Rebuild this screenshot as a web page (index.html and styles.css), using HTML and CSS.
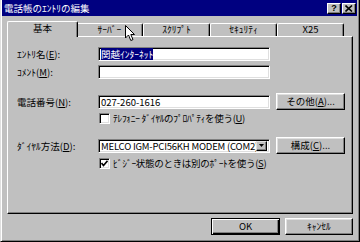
FILE: index.html
```html
<!DOCTYPE html>
<html lang="ja">
<head>
  <meta charset="UTF-8" />
  <title>電話帳のｴﾝﾄﾘの編集</title>
  <link rel="stylesheet" href="styles.css">
</head>
<body>
  <div class="window">
    <div class="titlebar">
      <span class="title">電話帳のｴﾝﾄﾘの編集</span>
      <div class="title-buttons">
        <div class="tbtn help">?</div>
        <div class="tbtn">
          <svg width="8" height="7" viewBox="0 0 8 7"><path d="M0.5 0.5 L7 6.5 M7 0.5 L0.5 6.5" stroke="#000" stroke-width="1.6"/></svg>
        </div>
      </div>
    </div>

    <div class="content">
      <!-- タブ -->
      <div class="tabs">
        <div class="tab active">基本</div>
        <div class="tab">ｻｰﾊﾞｰ</div>
        <div class="tab">ｽｸﾘﾌﾟﾄ</div>
        <div class="tab">ｾｷｭﾘﾃｨ</div>
        <div class="tab">X25</div>
      </div>

      <div class="panel">
        <div class="row">
          <label class="label">ｴﾝﾄﾘ名(<u>E</u>):</label>
          <div class="input"><span class="selected">関越ｲﾝﾀｰﾈｯﾄ</span></div>
        </div>
        <div class="row row-comment">
          <label class="label">ｺﾒﾝﾄ(<u>M</u>):</label>
          <div class="input"></div>
        </div>
        <div class="row row-phone">
          <label class="label">電話番号(<u>N</u>):</label>
          <div class="input">027-260-1616</div>
          <div class="button">その他(<u>A</u>)...</div>
        </div>
        <div class="row check-row">
          <span class="checkbox"></span>
          <span>ﾃﾚﾌｫﾆｰ ﾀﾞｲﾔﾙのﾌﾟﾛﾊﾟﾃｨを使う(<u>U</u>)</span>
        </div>
        <div class="row row-dial">
          <label class="label">ﾀﾞｲﾔﾙ方法(<u>D</u>):</label>
          <div class="input select">
            <span class="select-text">MELCO IGM-PCI56KH MODEM (COM2)</span>
            <span class="arrow"><svg width="5" height="3" viewBox="0 0 5 3"><path d="M0 0 H5 L2.5 3 Z" fill="#000"/></svg></span>
          </div>
          <div class="button">構成(<u>C</u>)...</div>
        </div>
        <div class="row check-row row-busy">
          <span class="checkbox"><svg width="7" height="7" viewBox="0 0 7 7"><path d="M0.5 3 L2.5 5.5 L6.5 0.8" stroke="#000" stroke-width="1.6" fill="none"/></svg></span>
          <span>ﾋﾞｼﾞｰ状態のときは別のﾎﾟｰﾄを使う(<u>S</u>)</span>
        </div>
      </div>

      <div class="footer">
        <div class="button default">OK</div>
        <div class="button cancel">ｷｬﾝｾﾙ</div>
      </div>
    </div>

    <!-- マウスカーソル -->
    <svg class="cursor" width="11" height="17" viewBox="0 0 11 17"><path d="M0.5 0.5 L0.5 13 L3.5 10 L5.8 15.5 L8 14.6 L5.8 9.5 L9.5 9.5 Z" fill="#fff" stroke="#000" stroke-width="1"/></svg>
  </div>
</body>
</html>
```

FILE: styles.css
```css
* {
  box-sizing: border-box;
}
body {
  margin: 0;
  background: #c0c0c0;
  font-family: "Noto Sans CJK JP", sans-serif;
  font-size: 9.5px;
  color: #000;
}
.window {
  position: relative;
  width: 360px;
  height: 242px;
  background: #c0c0c0;
  border-left: 1px solid #dfdfdf;
  border-right: 1px solid #000;
  border-bottom: 1px solid #000;
  box-shadow: inset 1px 0 #fff, inset -1px -1px #808080;
  padding: 0 2px 0 1px;
}
/* タイトルバー */
.titlebar {
  height: 16px;
  background: #000080;
  color: #fff;
  display: flex;
  align-items: center;
  padding: 0 1px 0 2px;
}
.title {
  line-height: 16px;
}
.title-buttons {
  margin-left: auto;
  display: flex;
  gap: 1px;
}
.tbtn {
  width: 14px;
  height: 11px;
  background: #c0c0c0;
  border: 1px solid;
  border-color: #fff #000 #000 #fff;
  box-shadow: inset -1px -1px #808080;
  display: flex;
  align-items: center;
  justify-content: center;
}
.tbtn.help {
  font-family: "Liberation Sans", sans-serif;
  font-weight: bold;
  font-size: 9px;
  line-height: 9px;
  color: #000;
}
/* 本体 */
.content {
  padding: 5px 4px 0 5px;
}
.tabs {
  height: 15px;
  display: flex;
  align-items: flex-end;
  padding-left: 2px;
}
.tab {
  width: 67px;
  height: 13px;
  border-top: 1px solid #fff;
  border-left: 1px solid #fff;
  border-right: 1px solid #000;
  border-radius: 2px 2px 0 0;
  box-shadow: inset -1px 0 #808080;
  text-align: center;
  line-height: 11px;
}
.tab.active {
  position: relative;
  z-index: 1;
  width: 71px;
  height: 16px;
  margin: 0 -2px -1px;
  background: #c0c0c0;
  line-height: 13px;
}
.panel {
  height: 178px;
  border: 1px solid;
  border-color: #fff #000 #000 #fff;
  box-shadow: inset -1px -1px #808080;
  padding: 10px 0 0 9px;
}
.row {
  display: flex;
  align-items: center;
  gap: 6px;
}
.label {
  width: 75px;
  flex: none;
}
.input {
  width: 172px;
  height: 14px;
  flex: none;
  background: #fff;
  border: 1px solid;
  border-color: #808080 #fff #fff #808080;
  box-shadow: inset 1px 1px #000, inset -1px -1px #dfdfdf;
  padding-left: 2px;
  line-height: 12px;
  white-space: nowrap;
  overflow: hidden;
}
.selected {
  background: #000080;
  color: #fff;
}
.row-comment {
  margin-top: 4px;
}
.row-phone {
  margin-top: 14px;
}
.row-dial {
  margin-top: 12px;
}
.button {
  width: 69px;
  height: 17px;
  flex: none;
  background: #c0c0c0;
  border: 1px solid;
  border-color: #fff #000 #000 #fff;
  box-shadow: inset -1px -1px #808080, inset 1px 1px #dfdfdf;
  text-align: center;
  line-height: 15px;
}
.check-row {
  margin-top: 1px;
  padding-left: 82px;
  gap: 3px;
  letter-spacing: -0.3px;
}
.row-busy {
  margin-top: 2px;
}
.checkbox {
  width: 11px;
  height: 11px;
  flex: none;
  background: #fff;
  border: 1px solid;
  border-color: #808080 #fff #fff #808080;
  box-shadow: inset 1px 1px #000, inset -1px -1px #dfdfdf;
  display: flex;
  align-items: center;
  justify-content: center;
}
.select {
  display: flex;
  align-items: center;
  padding-right: 2px;
}
.select-text {
  flex: 1;
  overflow: hidden;
  letter-spacing: -0.2px;
}
.arrow {
  width: 11px;
  height: 10px;
  flex: none;
  background: #c0c0c0;
  border: 1px solid;
  border-color: #dfdfdf #000 #000 #dfdfdf;
  box-shadow: inset -1px -1px #808080;
  display: flex;
  align-items: center;
  justify-content: center;
}
.footer {
  display: flex;
  justify-content: flex-end;
  gap: 5px;
  margin-top: 4px;
}
.button.default {
  border-color: #000;
  box-shadow: inset 1px 1px #fff, inset -1px -1px #000, inset -2px -2px #808080;
}
.button.cancel {
  width: 68px;
}
.cursor {
  position: absolute;
  left: 124px;
  top: 25px;
}
```
